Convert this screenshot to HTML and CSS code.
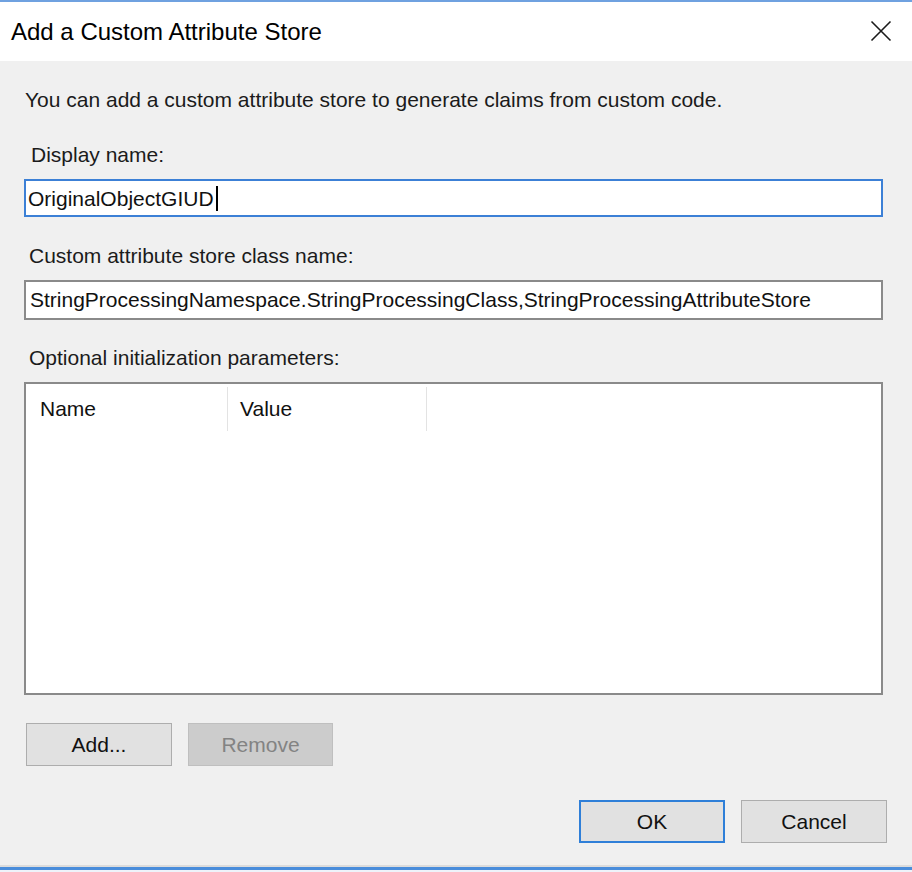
FILE: index.html
```html
<!DOCTYPE html>
<html>
<head>
<meta charset="utf-8">
<title>Add a Custom Attribute Store</title>
<link rel="stylesheet" href="styles.css">
</head>
<body>
<div class="window">
  <div class="titlebar">
    <div class="title">Add a Custom Attribute Store</div>
    <svg class="close" width="22" height="22" viewBox="0 0 22 22" aria-hidden="true">
      <path d="M1.5 1.5 L20.5 20.5 M20.5 1.5 L1.5 20.5" stroke="#1a1a1a" stroke-width="1.6" fill="none"/>
    </svg>
  </div>
  <div class="content">
    <div class="intro">You can add a custom attribute store to generate claims from custom code.</div>
    <div class="label label-display">Display name:</div>
    <div class="field field-focus">OriginalObjectGIUD<span class="caret"></span></div>
    <div class="label label-gap">Custom attribute store class name:</div>
    <div class="field field-plain">StringProcessingNamespace.StringProcessingClass,StringProcessingAttributeStore</div>
    <div class="label label-gap label-last">Optional initialization parameters:</div>
    <div class="list">
      <div class="list-head">
        <div class="col col-name">Name</div>
        <div class="col col-value">Value</div>
      </div>
    </div>
    <div class="row-actions">
      <div class="btn">Add...</div>
      <div class="btn btn-disabled">Remove</div>
    </div>
    <div class="row-dialog">
      <div class="btn btn-default">OK</div>
      <div class="btn">Cancel</div>
    </div>
  </div>
</div>
</body>
</html>
```
FILE: styles.css
```css
html, body {
  margin: 0;
  padding: 0;
}
body {
  width: 912px;
  height: 872px;
  overflow: hidden;
  background: #f0f0f0;
  font-family: "Liberation Sans", Arial, sans-serif;
  color: #1b1b1b;
}
.window {
  height: 872px;
  box-sizing: border-box;
  border-top: 2px solid #6fa1e0;
  border-bottom: 2px solid #eef3fa;
  display: flex;
  flex-direction: column;
}
.titlebar {
  height: 59px;
  background: #ffffff;
  display: flex;
  align-items: center;
  justify-content: space-between;
  padding: 0 20px 0 11px;
}
.title {
  font-size: 24px;
  line-height: 58px;
  color: #000;
}
.close {
  display: block;
  margin-top: -2px;
}
.content {
  flex: 1;
  display: flex;
  flex-direction: column;
  padding: 26px 25px 0 24px;
  border-bottom: 3px solid #4a8ddb;
  box-shadow: inset 0 -2px 0 #dcdcdc;
  font-size: 21px;
  line-height: 26px;
}
.intro {
  margin-left: 1px;
}
.label {
  margin-left: 5px;
}
.label-display {
  margin-top: 29px;
  margin-left: 7px;
}
.label-gap {
  margin-top: 26px;
}
.label-last {
  margin-top: 25px;
}
.field {
  margin-top: 11px;
  width: 859px;
  box-sizing: border-box;
  background: #ffffff;
  white-space: nowrap;
  overflow: hidden;
  color: #111;
}
.field-focus {
  border: 2px solid #3c80d6;
  padding: 5px 2px 3px 2px;
}
.field-plain {
  border: 2px solid #8a8a8a;
  padding: 5px 4px 5px 4px;
}
.caret {
  display: inline-block;
  width: 2px;
  height: 25px;
  background: #000;
  margin-left: 2px;
  vertical-align: -5px;
}
.list {
  margin-top: 11px;
  width: 859px;
  height: 313px;
  box-sizing: border-box;
  border: 2px solid #8a8a8a;
  background: #ffffff;
}
.list-head {
  display: flex;
  padding-top: 3px;
}
.col {
  height: 44px;
  line-height: 44px;
  border-right: 1px solid #e3e3e3;
  box-sizing: border-box;
  color: #111;
}
.col-name {
  width: 202px;
  padding-left: 14px;
}
.col-value {
  width: 199px;
  padding-left: 12px;
}
.row-actions {
  display: flex;
  gap: 16px;
  margin-top: 28px;
  margin-left: 2px;
}
.row-dialog {
  display: flex;
  justify-content: flex-end;
  gap: 16px;
  margin-top: 34px;
}
.btn {
  width: 146px;
  height: 43px;
  box-sizing: border-box;
  border: 1px solid #adadad;
  background: #e1e1e1;
  text-align: center;
  line-height: 41px;
  color: #111;
}
.btn-disabled {
  width: 145px;
  background: #cccccc;
  border-color: #bfbfbf;
  color: #838383;
}
.btn-default {
  border: 2px solid #2f7fd8;
  line-height: 39px;
}
```
